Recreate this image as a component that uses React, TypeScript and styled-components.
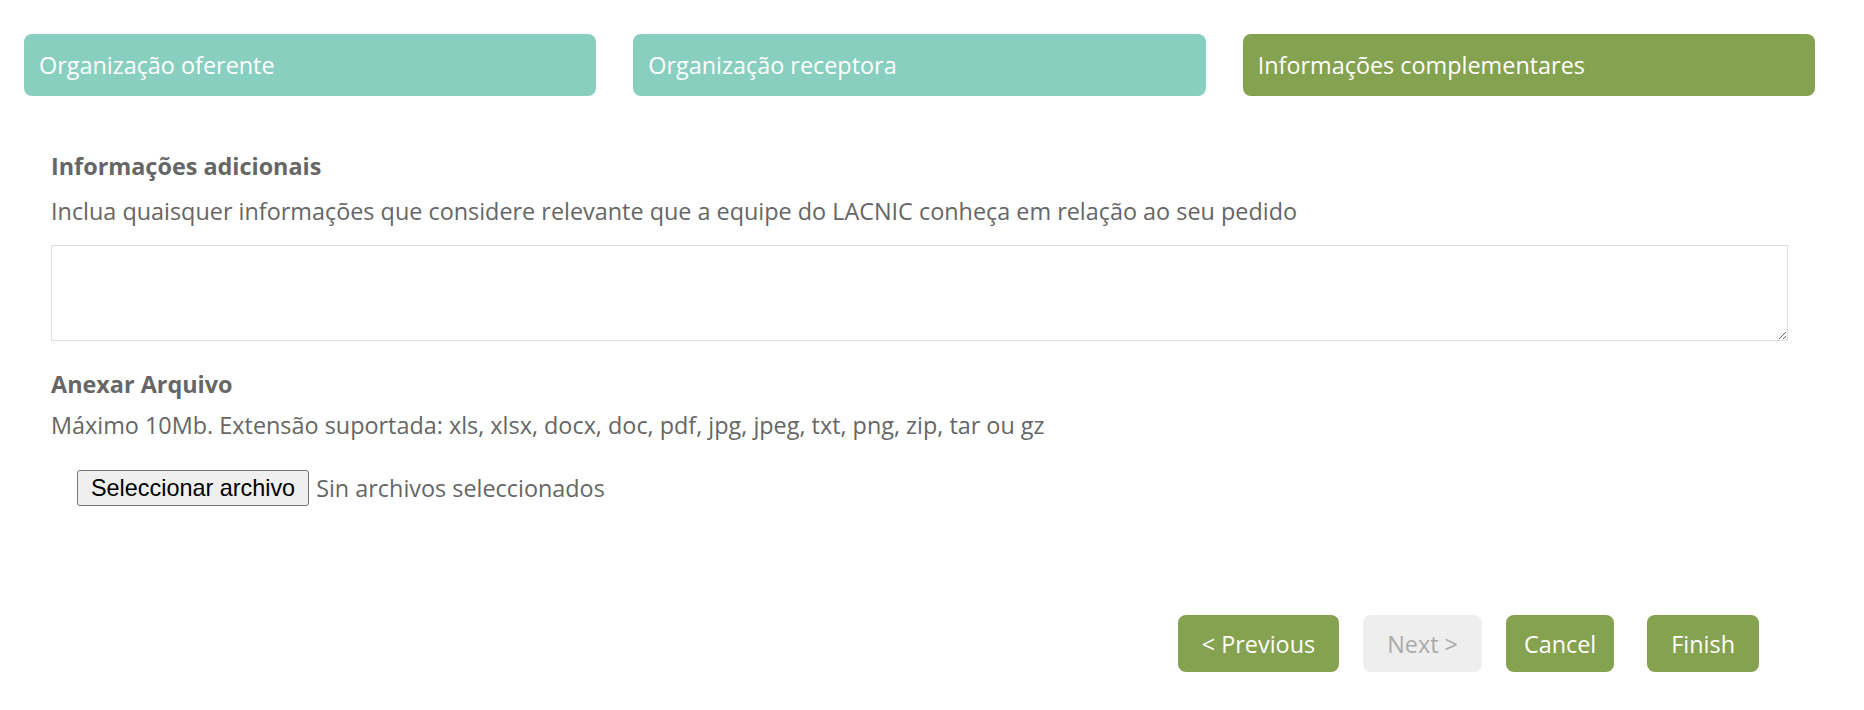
import React from "react";
import styled, { createGlobalStyle } from "styled-components";

const GlobalStyle = createGlobalStyle`
  body {
    margin: 0;
    background: #ffffff;
    font-family: "Open Sans", "Noto Sans", sans-serif;
    color: #666666;
  }
`;

const Page = styled.div`
  padding: 34px 49px 40px 24px;
`;

const Steps = styled.div`
  display: grid;
  grid-template-columns: repeat(3, 1fr);
  gap: 37px;
`;

const Step = styled.div<{ $active?: boolean }>`
  height: 62px;
  display: flex;
  align-items: center;
  padding: 0 15px;
  border-radius: 8px;
  background-color: ${(props) => (props.$active ? "#84a24f" : "#88cfbf")};
  color: #ffffff;
  font-size: 23.4px;
`;

const Form = styled.div`
  padding: 0 27px;
`;

const Label = styled.div<{ $top: number }>`
  margin-top: ${(props) => props.$top}px;
  font-weight: 700;
  font-size: 23.4px;
  line-height: 32px;
`;

const Help = styled.div<{ $top: number }>`
  margin-top: ${(props) => props.$top}px;
  font-size: 23.4px;
  line-height: 32px;
`;

const TextArea = styled.textarea`
  display: block;
  box-sizing: border-box;
  width: 100%;
  height: 96px;
  margin-top: 18px;
  border: 1px solid #dedede;
  border-radius: 0;
  font-family: inherit;
  font-size: 20px;
  resize: vertical;
  outline: none;
`;

const FileRow = styled.div`
  display: flex;
  align-items: center;
  gap: 7px;
  margin-top: 29px;
  padding-left: 26px;
`;

const FileButton = styled.button`
  height: 36px;
  padding: 0 13px;
  font-family: "Liberation Sans", Arial, sans-serif;
  font-size: 23.4px;
  color: #000000;
  background: #efefef;
  border: 1px solid #767676;
  border-radius: 3px;
`;

const FileStatus = styled.span`
  font-size: 23.4px;
  color: #666666;
`;

const Actions = styled.div`
  display: flex;
  justify-content: flex-end;
  align-items: center;
  margin-top: 109px;
  padding-right: 29px;
`;

const ActionButton = styled.button<{
  $disabled?: boolean;
  $gap: number;
  $padX?: number;
}>`
  height: 57px;
  margin-left: ${(props) => props.$gap}px;
  padding: 0 ${(props) => props.$padX ?? 24}px;
  border: none;
  border-radius: 8px;
  font-family: "Open Sans", sans-serif;
  font-size: 23.4px;
  background-color: ${(props) => (props.$disabled ? "#eeeeee" : "#84a24f")};
  color: ${(props) => (props.$disabled ? "#aaaaaa" : "#ffffff")};
`;

const steps = [
  { label: "Organização oferente", active: false },
  { label: "Organização receptora", active: false },
  { label: "Informações complementares", active: true },
];

export default function App() {
  return (
    <>
      <GlobalStyle />
      <Page>
        <Steps>
          {steps.map((step) => (
            <Step key={step.label} $active={step.active}>
              {step.label}
            </Step>
          ))}
        </Steps>
        <Form>
          <Label $top={54}>Informações adicionais</Label>
          <Help $top={13}>
            Inclua quaisquer informações que considere relevante que a equipe do
            LACNIC conheça em relação ao seu pedido
          </Help>
          <TextArea />
          <Label $top={27}>Anexar Arquivo</Label>
          <Help $top={9}>
            Máximo 10Mb. Extensão suportada: xls, xlsx, docx, doc, pdf, jpg,
            jpeg, txt, png, zip, tar ou gz
          </Help>
          <FileRow>
            <FileButton>Seleccionar archivo</FileButton>
            <FileStatus>Sin archivos seleccionados</FileStatus>
          </FileRow>
          <Actions>
            <ActionButton $gap={0}>&lt; Previous</ActionButton>
            <ActionButton $gap={24} $disabled>
              Next &gt;
            </ActionButton>
            <ActionButton $gap={24} $padX={18}>
              Cancel
            </ActionButton>
            <ActionButton $gap={33}>Finish</ActionButton>
          </Actions>
        </Form>
      </Page>
    </>
  );
}
